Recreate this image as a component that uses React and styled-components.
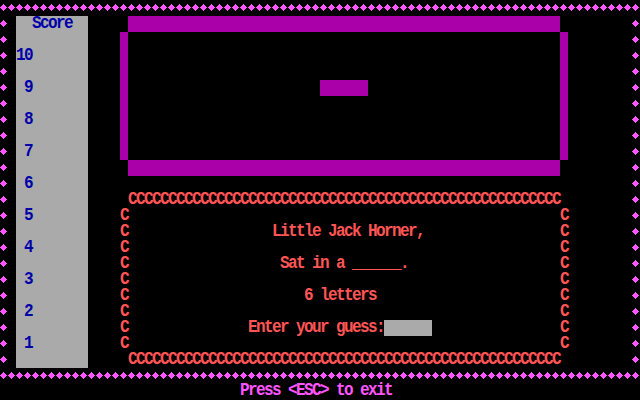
import React from 'react';
import styled, { createGlobalStyle } from 'styled-components';

const SCALE = 1.15;
const CELL = 16;
const LINE = CELL / SCALE;

const Global = createGlobalStyle`
  html, body { margin: 0; padding: 0; background: #000; }
  body { width: 640px; height: 400px; overflow: hidden; }
`;

const Screen = styled.div`
  width: 640px;
  height: 400px;
  background: #000;
  display: flex;
  flex-direction: column;
  font-family: "Liberation Mono", "DejaVu Sans Mono", monospace;
  font-weight: bold;
  font-size: 16px;
  line-height: 16px;
  letter-spacing: -1.6px;
`;

/* DOS text: 8x16 cells, glyphs stretched vertically like the VGA font */
const Text = styled.span`
  display: block;
  flex: none;
  line-height: ${LINE}px;
  white-space: pre;
  transform: translateY(${(p) => (p.$shift ?? 0.6)}px) scaleY(${SCALE});
  transform-origin: 50% 0;
`;

const DiamondRow = styled.div`
  display: flex;
  height: 16px;
  flex: none;
`;

const DiamondCol = styled.div`
  display: flex;
  flex-direction: column;
  width: 8px;
  flex: none;
`;

const DiamondCell = styled.svg`
  display: block;
  width: 8px;
  height: 16px;
  flex: none;
`;

const Diamond = () => (
  <DiamondCell viewBox="0 0 8 16" shapeRendering="crispEdges">
    <path
      fill="#ff55ff"
      d="M3 4H4V5H5V6H6V7H7V8H6V9H5V10H4V11H3V10H2V9H1V8H0V7H1V6H2V5H3Z"
    />
  </DiamondCell>
);

const Middle = styled.div`
  display: flex;
  height: 352px;
  flex: none;
`;

const Content = styled.div`
  flex: 1;
  display: flex;
`;

const ScorePanel = styled.div`
  margin-left: 8px;
  width: 72px;
  background: #aaaaaa;
  color: #0000aa;
  display: flex;
  flex-direction: column;
`;

const ScoreTitle = styled.div`
  height: 32px;
  padding-left: 16px;
  display: flex;
  align-items: flex-start;
`;

const ScoreMark = styled.div`
  height: 32px;
  width: 16px;
  display: flex;
  justify-content: flex-end;
  align-items: flex-start;
`;

const Main = styled.div`
  margin-left: 32px;
  display: flex;
  flex-direction: column;
  gap: 16px;
`;

const Frame = styled.div`
  display: grid;
  grid-template-columns: 8px 432px 8px;
  grid-template-rows: 16px 128px 16px;
`;

const Bar = styled.div`
  background: #aa00aa;
  grid-column: ${(p) => p.$col};
  grid-row: ${(p) => p.$row};
`;

const Field = styled.div`
  grid-column: 2;
  grid-row: 2;
  position: relative;
`;

const Paddle = styled.div`
  position: absolute;
  left: 192px;
  top: 48px;
  width: 48px;
  height: 16px;
  background: #aa00aa;
`;

const CBox = styled.div`
  display: grid;
  grid-template-columns: 8px 432px 8px;
  grid-template-rows: 16px 144px 16px;
  color: #ff5555;
`;

const CEdge = styled.div`
  grid-column: ${(p) => p.$col};
  grid-row: ${(p) => p.$row};
  display: flex;
  align-items: flex-start;
`;

const CColumn = styled.div`
  grid-column: ${(p) => p.$col};
  grid-row: 2;
  display: flex;
  flex-direction: column;
  gap: ${CELL - LINE}px;
`;

const Verse = styled.div`
  grid-column: 2;
  grid-row: 2;
  display: flex;
  flex-direction: column;
  padding-top: 16px;
  gap: 16px;
`;

const Line = styled.div`
  height: 16px;
  display: flex;
  align-items: flex-start;
  padding-left: ${(p) => p.$col * 8}px;
`;

const GuessBox = styled.div`
  width: 48px;
  height: 16px;
  background: #aaaaaa;
`;

const Footer = styled.div`
  height: 16px;
  padding-left: 240px;
  display: flex;
  align-items: flex-start;
  color: #ff55ff;
`;

const range = (n) => Array.from({ length: n }, (_, i) => i);
const CS = 'C'.repeat(54);

export default function App() {
  return (
    <>
      <Global />
      <Screen>
        <DiamondRow>
          {range(80).map((i) => <Diamond key={i} />)}
        </DiamondRow>
        <Middle>
          <DiamondCol>
            {range(22).map((i) => <Diamond key={i} />)}
          </DiamondCol>
          <Content>
            <ScorePanel>
              <ScoreTitle><Text>Score</Text></ScoreTitle>
              {[10, 9, 8, 7, 6, 5, 4, 3, 2, 1].map((n) => (
                <ScoreMark key={n}><Text>{n}</Text></ScoreMark>
              ))}
            </ScorePanel>
            <Main>
              <Frame>
                <Bar $col={2} $row={1} />
                <Bar $col={1} $row={2} />
                <Field><Paddle /></Field>
                <Bar $col={3} $row={2} />
                <Bar $col={2} $row={3} />
              </Frame>
              <CBox>
                <CEdge $col={2} $row={1}><Text>{CS}</Text></CEdge>
                <CColumn $col={1}>
                  {range(9).map((i) => <Text key={i}>C</Text>)}
                </CColumn>
                <Verse>
                  <Line $col={18}><Text>Little Jack Horner,</Text></Line>
                  <Line $col={19}><Text>Sat in a ______.</Text></Line>
                  <Line $col={22}><Text>6 letters</Text></Line>
                  <Line $col={15}><Text>Enter your guess:</Text><GuessBox /></Line>
                </Verse>
                <CColumn $col={3}>
                  {range(9).map((i) => <Text key={i}>C</Text>)}
                </CColumn>
                <CEdge $col={2} $row={3}><Text>{CS}</Text></CEdge>
              </CBox>
            </Main>
          </Content>
          <DiamondCol>
            {range(22).map((i) => <Diamond key={i} />)}
          </DiamondCol>
        </Middle>
        <DiamondRow>
          {range(80).map((i) => <Diamond key={i} />)}
        </DiamondRow>
        <Footer><Text $shift={-0.8}>Press &lt;ESC&gt; to exit</Text></Footer>
      </Screen>
    </>
  );
}
